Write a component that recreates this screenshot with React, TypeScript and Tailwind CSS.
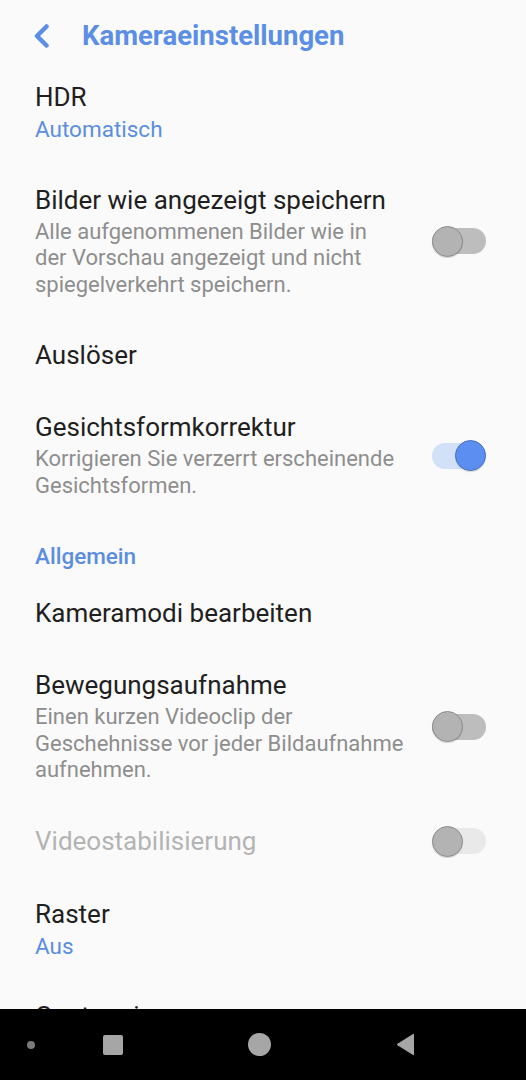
import { useState } from "react";

type Item = {
  title: string;
  value?: string;
  summary?: string[];
  toggle?: boolean;
  disabled?: boolean;
};

const cameraItems: Item[] = [
  { title: "HDR", value: "Automatisch" },
  {
    title: "Bilder wie angezeigt speichern",
    summary: [
      "Alle aufgenommenen Bilder wie in",
      "der Vorschau angezeigt und nicht",
      "spiegelverkehrt speichern.",
    ],
    toggle: false,
  },
  { title: "Auslöser" },
  {
    title: "Gesichtsformkorrektur",
    summary: ["Korrigieren Sie verzerrt erscheinende", "Gesichtsformen."],
    toggle: true,
  },
];

const generalItems: Item[] = [
  { title: "Kameramodi bearbeiten" },
  {
    title: "Bewegungsaufnahme",
    summary: [
      "Einen kurzen Videoclip der",
      "Geschehnisse vor jeder Bildaufnahme",
      "aufnehmen.",
    ],
    toggle: false,
  },
  { title: "Videostabilisierung", toggle: false, disabled: true },
  { title: "Raster", value: "Aus" },
  { title: "Geotagging" },
];

function Toggle({
  on,
  disabled,
  onChange,
}: {
  on: boolean;
  disabled?: boolean;
  onChange: () => void;
}) {
  const track = disabled
    ? "bg-[#e9e9e9]"
    : on
      ? "bg-[#d3e1f8]"
      : "bg-[#bdbdbd]";
  const thumb = on
    ? "left-[23px] bg-[#5b8ef0] border-[#4a73c2]"
    : "left-0 bg-[#b3b3b3] border-[#8e8e8e]";

  return (
    <button
      onClick={onChange}
      disabled={disabled}
      className="relative w-[54px] h-[31px] shrink-0 flex items-center"
    >
      <span className={`w-[54px] h-[26px] rounded-full ${track}`} />
      <span
        className={`absolute top-0 size-[31px] rounded-full border ${thumb} shadow-[0_1px_1px_rgba(0,0,0,0.15)]`}
      />
    </button>
  );
}

function Row({
  item,
  on,
  onToggle,
}: {
  item: Item;
  on: boolean;
  onToggle: () => void;
}) {
  return (
    <div className="flex items-center justify-between pl-[35px] pr-[40px] py-[21px]">
      <div className="flex flex-col">
        <span
          className={`text-[26px] leading-[30px] whitespace-nowrap ${
            item.disabled ? "text-[#b4b4b4]" : "text-[#1f1f1f]"
          }`}
        >
          {item.title}
        </span>
        {item.value && (
          <span className="mt-[4px] text-[22.5px] leading-[26.5px] text-[#5b8ee0]">
            {item.value}
          </span>
        )}
        {item.summary && (
          <div className="mt-[4px] flex flex-col text-[22px] leading-[26.5px] text-[#8e8e8e]">
            {item.summary.map((line) => (
              <span key={line} className="whitespace-nowrap">
                {line}
              </span>
            ))}
          </div>
        )}
      </div>
      {item.toggle !== undefined && (
        <Toggle on={on} disabled={item.disabled} onChange={onToggle} />
      )}
    </div>
  );
}

export default function App() {
  const [toggles, setToggles] = useState<{ [key: string]: boolean }>(() => {
    const init: { [key: string]: boolean } = {};
    [...cameraItems, ...generalItems].forEach((i) => {
      if (i.toggle !== undefined) init[i.title] = i.toggle;
    });
    return init;
  });

  const flip = (title: string) =>
    setToggles((prev) => ({ ...prev, [title]: !prev[title] }));

  return (
    <div
      className="h-[1080px] w-[526px] flex flex-col bg-[#fafafa] overflow-hidden"
      style={{ fontFamily: "Roboto, 'Liberation Sans', sans-serif" }}
    >
      <div className="flex-1 overflow-hidden">
        {/* header */}
        <div className="flex items-center pt-[20px] pb-[9px] pl-[33px]">
          <svg width="17" height="24" viewBox="0 0 17 24" className="shrink-0">
            <polyline
              points="13.5,2.5 4,12 13.5,21.5"
              fill="none"
              stroke="#5b8ee6"
              strokeWidth="4.5"
              strokeLinecap="round"
              strokeLinejoin="round"
            />
          </svg>
          <h1 className="ml-[32px] text-[27.5px] leading-[32px] font-bold text-[#5b8ee6]">
            Kameraeinstellungen
          </h1>
        </div>

        {cameraItems.map((item) => (
          <Row
            key={item.title}
            item={item}
            on={!!toggles[item.title]}
            onToggle={() => flip(item.title)}
          />
        ))}

        <div className="pl-[35px] pt-[23px] pb-[8px] text-[22.5px] leading-[26px] font-medium text-[#5b8ee0]">
          Allgemein
        </div>

        {generalItems.map((item) => (
          <Row
            key={item.title}
            item={item}
            on={!!toggles[item.title]}
            onToggle={() => flip(item.title)}
          />
        ))}
      </div>

      {/* navigation bar */}
      <div className="h-[71px] shrink-0 bg-black flex items-center">
        <div className="ml-[27px] size-[8px] rounded-full bg-[#7a7a7a]" />
        <div className="ml-[68px] size-[20px] rounded-[2px] bg-[#a6a6a6]" />
        <div className="ml-[125px] size-[23px] rounded-full bg-[#a6a6a6]" />
        <svg width="20" height="23" viewBox="0 0 20 23" className="ml-[125px]">
          <path
            d="M18 1.5 L18 21.5 Q18 22.5 17 22 L1.5 12.3 Q0.5 11.5 1.5 10.7 L17 1 Q18 0.5 18 1.5 Z"
            fill="#a6a6a6"
          />
        </svg>
      </div>
    </div>
  );
}
